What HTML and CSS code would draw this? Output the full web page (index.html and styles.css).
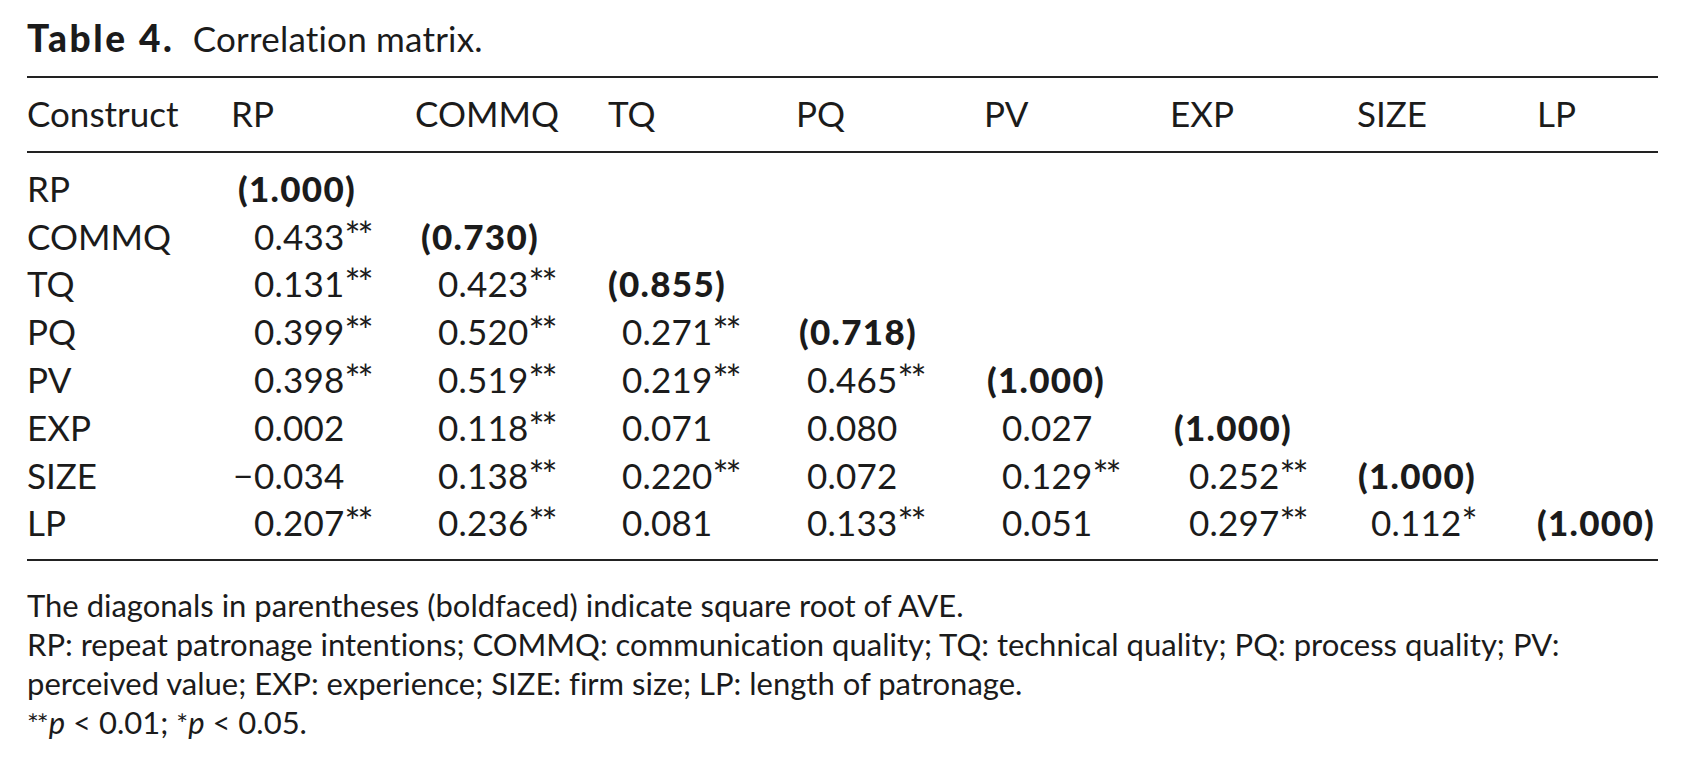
FILE: index.html
```html
<!DOCTYPE html>
<html>
<head>
<meta charset="utf-8">
<link rel="stylesheet" href="styles.css">
</head>
<body>
<div class="page">
  <div class="title"><b>Table 4.</b>&nbsp; Correlation matrix.</div>
  <div class="rule"></div>
  <div class="grid head">
    <div>Construct</div><div class="h1">RP</div><div class="h2">COMMQ</div><div class="h3">TQ</div><div class="h4">PQ</div><div class="h5">PV</div><div class="h6">EXP</div><div class="h7">SIZE</div><div class="h8">LP</div>
  </div>
  <div class="rule"></div>
  <div class="body">
    <div class="grid row">
      <div>RP</div><div class="d c1">(1.000)</div><div></div><div></div><div></div><div></div><div></div><div></div><div></div>
    </div>
    <div class="grid row">
      <div>COMMQ</div><div class="n c1">0.433<i>**</i></div><div class="d c2">(0.730)</div><div></div><div></div><div></div><div></div><div></div><div></div>
    </div>
    <div class="grid row">
      <div>TQ</div><div class="n c1">0.131<i>**</i></div><div class="n c2">0.423<i>**</i></div><div class="d c3">(0.855)</div><div></div><div></div><div></div><div></div><div></div>
    </div>
    <div class="grid row">
      <div>PQ</div><div class="n c1">0.399<i>**</i></div><div class="n c2">0.520<i>**</i></div><div class="n c3">0.271<i>**</i></div><div class="d c4">(0.718)</div><div></div><div></div><div></div><div></div>
    </div>
    <div class="grid row">
      <div>PV</div><div class="n c1">0.398<i>**</i></div><div class="n c2">0.519<i>**</i></div><div class="n c3">0.219<i>**</i></div><div class="n c4">0.465<i>**</i></div><div class="d c5">(1.000)</div><div></div><div></div><div></div>
    </div>
    <div class="grid row">
      <div>EXP</div><div class="n c1">0.002</div><div class="n c2">0.118<i>**</i></div><div class="n c3">0.071</div><div class="n c4">0.080</div><div class="n c5">0.027</div><div class="d c6">(1.000)</div><div></div><div></div>
    </div>
    <div class="grid row">
      <div>SIZE</div><div class="n c1"><span class="minus">−</span>0.034</div><div class="n c2">0.138<i>**</i></div><div class="n c3">0.220<i>**</i></div><div class="n c4">0.072</div><div class="n c5">0.129<i>**</i></div><div class="n c6">0.252<i>**</i></div><div class="d c7">(1.000)</div><div></div>
    </div>
    <div class="grid row">
      <div>LP</div><div class="n c1">0.207<i>**</i></div><div class="n c2">0.236<i>**</i></div><div class="n c3">0.081</div><div class="n c4">0.133<i>**</i></div><div class="n c5">0.051</div><div class="n c6">0.297<i>**</i></div><div class="n c7">0.112<i>*</i></div><div class="d c8">(1.000)</div>
    </div>
  </div>
  <div class="rule"></div>
  <div class="notes">
    <p>The diagonals in parentheses (boldfaced) indicate square root of AVE.</p>
    <p>RP: repeat patronage intentions; COMMQ: communication quality; TQ: technical quality; PQ: process quality; PV:</p>
    <p>perceived value; EXP: experience; SIZE: firm size; LP: length of patronage.</p>
    <p><span class="st">**</span><em>p</em> &lt; 0.01; <span class="st">*</span><em>p</em> &lt; 0.05.</p>
  </div>
</div>
</body>
</html>
```

FILE: styles.css
```css
html, body {
  margin: 0;
  padding: 0;
  background: #ffffff;
}
body {
  font-family: Lato, "Open Sans", sans-serif;
  color: #1b1b1b;
  font-variant-ligatures: none;
}
.page {
  width: 1631px;
  margin-left: 27px;
}
.title {
  font-size: 35px;
  line-height: 40px;
  padding-top: 18px;
  padding-bottom: 18px;
  letter-spacing: 0.2px;
}
.title b {
  font-weight: 900;
  font-size: 37px;
  letter-spacing: 2.6px;
}
.rule {
  height: 2px;
  background: #222222;
}
.grid {
  display: grid;
  grid-template-columns: 204px 184px 193px 188px 188px 186px 187px 180px 121px;
  font-size: 35px;
  line-height: 47.8px;
  white-space: nowrap;
}
.head {
  padding-top: 12px;
  padding-bottom: 13px;
}
.body {
  padding-top: 12px;
  padding-bottom: 12px;
}
.row .n {
  letter-spacing: 0.2px;
}
.row i {
  font-style: normal;
  font-size: 1.08em;
  letter-spacing: -3px;
  line-height: 0;
}
.d {
  font-weight: 900;
  letter-spacing: 1.3px;
}
.minus {
  display: inline-block;
  width: 21px;
  margin-left: -21px;
}
.n.c1 { padding-left: 23px; }
.n.c2 { padding-left: 23px; }
.n.c3 { padding-left: 14px; }
.n.c4 { padding-left: 11px; }
.n.c5 { padding-left: 18px; }
.n.c6 { padding-left: 19px; }
.n.c7 { padding-left: 14px; }
.d.c1 { padding-left: 7px; }
.d.c2 { padding-left: 6px; }
.d.c3 { padding-left: 0px; }
.d.c4 { padding-left: 3px; }
.d.c5 { padding-left: 3px; }
.d.c6 { padding-left: 4px; }
.d.c7 { padding-left: 1px; }
.d.c8 { padding-left: 0px; }
.notes {
  padding-top: 25px;
  font-size: 31px;
  line-height: 39px;
}
.notes p {
  margin: 0;
  white-space: nowrap;
}
.notes em {
  font-style: italic;
}
.st {
  font-size: 0.9em;
  letter-spacing: -2px;
  margin-right: 2px;
}
```
